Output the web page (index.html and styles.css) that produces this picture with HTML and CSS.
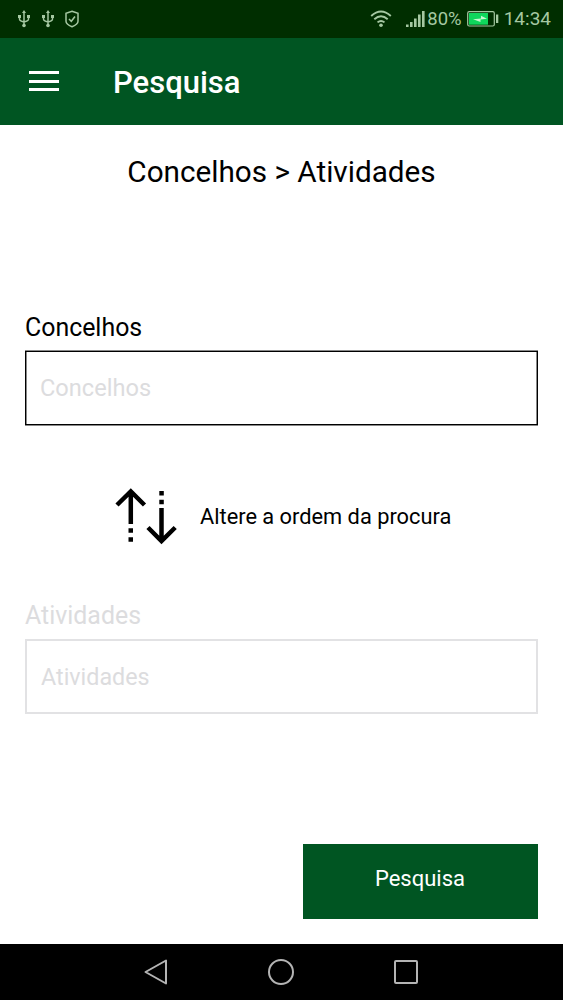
FILE: index.html
```html
<!DOCTYPE html>
<html lang="pt">
<head>
  <meta charset="UTF-8">
  <title>Pesquisa</title>
  <link rel="stylesheet" href="styles.css">
</head>
<body>
  <div class="status-bar">
    <svg class="usb" width="12" height="18" viewBox="0 0 12 18">
      <path d="M6 2v14M1.500 6v3q0 2 4.500 3q4.500-1 4.500-3V6" />
      <path class="solid" d="M6 0l2 3H4zM0 5h3v3H0zM9 5h3v3H9z" />
      <circle class="solid" cx="6" cy="15.500" r="1.800" />
    </svg>
    <svg class="usb" width="12" height="18" viewBox="0 0 12 18">
      <path d="M6 2v14M1.500 6v3q0 2 4.500 3q4.500-1 4.500-3V6" />
      <path class="solid" d="M6 0l2 3H4zM0 5h3v3H0zM9 5h3v3H9z" />
      <circle class="solid" cx="6" cy="15.500" r="1.800" />
    </svg>
    <svg class="shield" width="14" height="18" viewBox="0 0 14 18">
      <path d="M7 1.200l6 2v8q0 3-6 5.500q-6-2.500-6-5.500v-8z" />
      <path d="M4 9l2.300 2.300L10 6.500" />
    </svg>
    <svg class="wifi" width="22" height="18" viewBox="0 0 22 18">
      <path d="M1.200 6q9.800-9 19.600 0M4.300 9.300q6.700-6 13.400 0M7.500 12.400q3.500-3 7 0" />
      <circle class="solid" cx="11" cy="15.200" r="1.800" />
    </svg>
    <svg class="signal" width="19" height="18" viewBox="0 0 19 18">
      <path class="solid" d="M0 14.500h2.600V17H0zM4 12h2.600v5H4zM8 8.500h2.600V17H8zM12 4.500h2.600V17H12zM16 1h2.600v16H16z" />
    </svg>
    <span class="battery-text">80%</span>
    <svg class="battery" width="32" height="16" viewBox="0 0 32 16">
      <rect x=".7" y=".7" width="26.600" height="14.300" rx="1.500" />
      <rect class="charge" x="2" y="2" width="19" height="11.700" />
      <path class="bolt" d="M6 8.200l8-.7V4.700L20 7.800l-6.500.7v2.600z" />
      <path class="solid" d="M29 3.500h2.300v8.500H29z" />
    </svg>
    <span class="clock">14:34</span>
  </div>

  <header class="app-bar">
    <div class="menu-icon">
      <span></span>
      <span></span>
      <span></span>
    </div>
    <h1>Pesquisa</h1>
  </header>

  <main>
    <h2>Concelhos &gt; Atividades</h2>

    <form>
      <div class="field">
        <label for="concelhos">Concelhos</label>
        <input type="text" id="concelhos" placeholder="Concelhos">
      </div>

      <div class="swap">
        <svg width="62" height="58" viewBox="0 0 62 58">
          <path d="M15.800 37V4.500M2 18L15.800 4.500L29.500 18" />
          <path d="M46.500 21v33M33 40.500L46.500 54L60.200 40.500" />
          <path class="dots" d="M13.500 41.300h4.500v4.500h-4.500zM13.500 50.200h4.500v4.500h-4.500zM44.300 4h4.500v4.500h-4.500zM44.300 12.800h4.500v4.500h-4.500z" />
        </svg>
        <span>Altere a ordem da procura</span>
      </div>

      <div class="field inactive">
        <label for="atividades">Atividades</label>
        <input type="text" id="atividades" placeholder="Atividades">
      </div>

      <button type="button">Pesquisa</button>
    </form>
  </main>

  <nav class="nav-bar">
    <svg width="28" height="28" viewBox="0 0 28 28">
      <path d="M24 2.500v23L3.500 14z" />
    </svg>
    <svg width="28" height="28" viewBox="0 0 28 28">
      <circle cx="14" cy="14" r="12" />
    </svg>
    <svg width="28" height="28" viewBox="0 0 28 28">
      <rect x="3" y="3" width="22" height="22" rx="1" />
    </svg>
  </nav>
</body>
</html>
```

FILE: styles.css
```css
* {
  box-sizing: border-box;
}

body {
  font-family: Roboto, sans-serif;
  margin: 0;
  height: 1000px;
  display: flex;
  flex-direction: column;
  background: #fff;
  color: #000;
}

svg {
  display: block;
  flex: none;
}

/* Status bar */
.status-bar {
  height: 37.5px;
  padding: 0 12px 0 18px;
  display: flex;
  align-items: center;
  background: #002e00;
  color: #a5c8a2;
  font-size: 19px;
}

.status-bar svg {
  fill: none;
  stroke: #a5c8a2;
  stroke-width: 1.5;
}

.status-bar .solid {
  fill: #a5c8a2;
  stroke: none;
}

.battery-text {
  font-size: 18.5px;
}

.usb {
  margin-right: 12px;
}

.shield {
  margin-left: -1px;
}

.status-bar .wifi {
  margin-left: auto;
  margin-right: 14px;
  stroke-width: 1.9;
}

.signal {
  margin-right: 2px;
}

.battery {
  margin: 0 5px 0 5px;
}

.status-bar .battery rect {
  stroke-width: 1.2;
}

.status-bar .battery .charge {
  fill: #0fd75c;
  stroke: none;
}

.status-bar .bolt {
  fill: #c6f7cf;
  stroke: none;
}

/* Header */
.app-bar {
  height: 87.5px;
  padding: 2px 0 0 29px;
  display: flex;
  align-items: center;
  background: #005522;
  color: #fff;
}

.menu-icon {
  width: 30px;
  height: 20px;
  margin: 0 54px 2px 0;
  display: flex;
  flex-direction: column;
  justify-content: space-between;
}

.menu-icon span {
  height: 3px;
  background: #fff;
}

h1 {
  margin: 0;
  font-size: 31px;
  font-weight: 500;
}

/* Search form */
main {
  flex: 1;
  padding: 29px 25px 0;
}

h2 {
  margin: 0 0 122px;
  font-size: 29.7px;
  line-height: 36px;
  font-weight: 400;
  text-align: center;
}

label {
  display: block;
  height: 39px;
  font-size: 24.9px;
  line-height: 32px;
}

input {
  display: block;
  width: 100%;
  height: 74px;
  padding: 0 14px;
  border: 1px solid #000;
  border-radius: 0;
  box-shadow: 0 -1px #888, 0 1px #888, inset 1px 0 #888, inset -1px 0 #888;
  background: #fff;
  font-family: inherit;
  font-size: 23.6px;
}

input::placeholder {
  color: #dcdcde;
}

.inactive label {
  color: #dcdcde;
}

.inactive input {
  height: 75px;
  border: 2px solid #e2e2e4;
  box-shadow: none;
  font-size: 23.3px;
}

.swap {
  height: 175px;
  padding: 62px 0 0 90px;
  display: flex;
  align-items: flex-start;
  gap: 23px;
  font-size: 21.8px;
  line-height: 60px;
}

.swap path {
  fill: none;
  stroke: #000;
  stroke-width: 4.5;
}

.swap .dots {
  fill: #000;
  stroke: none;
}

button {
  display: block;
  width: 235px;
  height: 75px;
  margin: 130px 0 0 auto;
  padding: 0 1px 6px 0;
  border: 0;
  background: #005522;
  color: #fff;
  font-family: inherit;
  font-size: 22px;
}

/* Navigation bar */
.nav-bar {
  height: 56.5px;
  padding-right: 1px;
  display: flex;
  align-items: center;
  justify-content: center;
  gap: 97px;
  background: #000;
}

.nav-bar svg {
  fill: none;
  stroke: #b4b4b4;
  stroke-width: 2;
  stroke-linejoin: round;
}
```
